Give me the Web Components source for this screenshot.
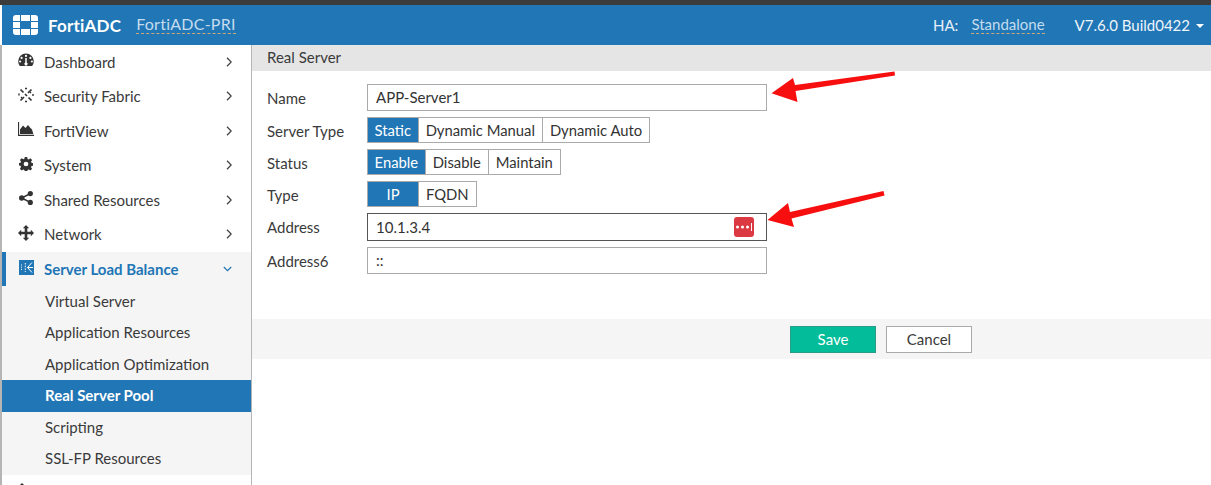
<!DOCTYPE html>
<html>
<head>
<meta charset="utf-8">
<title>FortiADC</title>
<style>
  html, body { margin: 0; padding: 0; background: #fff; overflow: hidden; }
  body { font-family: Lato, "Open Sans", sans-serif; font-size: 15px; color: #3a3a3a; }
</style>
</head>
<body>
<adc-app></adc-app>
<script>
const ICONS = {
  dashboard: `<svg viewBox="0 0 16 14" width="16" height="14"><path fill="#333" fill-rule="evenodd" d="M8 0.5A7.8 7.8 0 0 0 0.2 8.3c0 1.9.6 3.5 1.7 4.7h12.2a7.6 7.6 0 0 0 1.7-4.7A7.8 7.8 0 0 0 8 .5zM8 1.8a1.1 1.1 0 1 1 0 2.2a1.1 1.1 0 0 1 0-2.2zM3.6 3.8a1.1 1.1 0 1 1 0 2.2a1.1 1.1 0 0 1 0-2.2zM12.4 3.8a1.1 1.1 0 1 1 0 2.2a1.1 1.1 0 0 1 0-2.2zM2.1 7.4a1.1 1.1 0 1 1 0 2.2a1.1 1.1 0 0 1 0-2.2zM13.9 7.4a1.1 1.1 0 1 1 0 2.2a1.1 1.1 0 0 1 0-2.2zM7.2 5l1.6 0l-.1 4.6a1.6 1.6 0 1 1-1.4 0z"/></svg>`,
  fabric: `<svg viewBox="0 0 16 16" width="16" height="16" fill="none" stroke="#333" stroke-width="1.700"><path d="M2.500 2.500l3 3M7 7l2 2M10.500 10.500l3 3M13.500 2.500l-3.500 3.500M6 10l-3.500 3.500"/><path stroke-width="1.400" d="M7 1.500h2M1 6.500v2M15 7v2M7 14.500h2M12 5l1 1M4 11l-1 -1"/></svg>`,
  view: `<svg viewBox="0 0 16 14" width="16" height="14"><path fill="#333" d="M0 0h1.100v12.800H16V14H0z"/><path fill="#333" d="M2 12V7.500l3-4 2.500 2.500L10 3l2 2.500 2 2 1.300 4.500z"/></svg>`,
  cog: `<svg viewBox="0 0 16 16" width="14" height="14"><path fill="#333" fill-rule="evenodd" d="M6.600 0h2.800l.4 2.200 1.300.6 1.900-1.300 2 2-1.300 1.900.6 1.300 2.200.4v2.800l-2.200.4-.6 1.300 1.300 1.900-2 2-1.900-1.300-1.300.6-.4 2.200H6.600l-.4-2.200-1.300-.6L3 15.300l-2-2 1.300-1.900-.6-1.300L-.5 9.700V6.900l2.200-.4.6-1.300L1 3.300l2-2 1.900 1.300 1.300-.6zM8 5.300a2.700 2.700 0 1 0 0 5.400a2.700 2.700 0 0 0 0-5.400z"/></svg>`,
  share: `<svg viewBox="0 0 14 14" width="14" height="14"><g fill="#333"><circle cx="11.300" cy="2.600" r="2.600"/><circle cx="11.300" cy="11.400" r="2.600"/><circle cx="2.700" cy="7" r="2.700"/></g><path stroke="#333" stroke-width="1.600" d="M2.700 7L11.300 2.600M2.700 7l8.600 4.400"/></svg>`,
  move: `<svg viewBox="0 0 16 16" width="16" height="16"><path fill="#333" d="M8 0l3.200 3.200H9.300v3.500h3.500V4.800L16 8l-3.200 3.200V9.300H9.300v3.500h1.900L8 16l-3.200-3.200h1.900V9.300H3.200v1.900L0 8l3.200-3.200v1.900h3.500V3.200H4.800z"/></svg>`,
  slb: `<svg viewBox="0 0 15 15" width="15" height="15"><rect width="15" height="15" fill="#2176b5"/><g fill="none" stroke="#fff" stroke-width="1"><path d="M13 2.500L8.500 7.500L13 12.500M8.500 7.500H14"/><path d="M6.300 3v9" stroke-dasharray="1.500 1.200"/><path d="M2.500 4.500v6" stroke-dasharray="1 1.200"/></g></svg>`
};

class AdcHeader extends HTMLElement {
  constructor() {
    super();
    this.attachShadow({ mode: "open" });
    this.shadowRoot.innerHTML = `
      <style>
        :host { display: flex; align-items: center; height: 40px; margin-left: 2px; background: #2176b5; color: #fff; }
        .logo { margin-left: 11px; width: 26px; height: 20px; flex: none; }
        .brand { margin-left: 9px; font-size: 17px; font-weight: 700; letter-spacing: .2px; }
        .dash { color: #c4dcef; border-bottom: 1px dashed #d0a878; line-height: 16px; padding-bottom: 1px; }
        .host { margin-left: 15px; font-size: 16px; letter-spacing: .25px; }
        .right { margin-left: auto; display: flex; align-items: center; font-size: 15px; }
        .ha { color: #e6f0f8; margin-right: 13px; }
        .ver { margin-left: 30px; margin-right: 7px; white-space: nowrap; color: #eef5fb; }
        .caret { width: 0; height: 0; border: 4px solid transparent; border-top: 4.500px solid #fff; border-bottom: 0; margin-left: 6px; display: inline-block; vertical-align: 3px; }
      </style>
      <svg class="logo" viewBox="0 0 26 20" fill="#fff">
        <path d="M3 0h4v6H0V3a3 3 0 0 1 3-3zM8 0h9v6H8zM18 0h4a3 3 0 0 1 3 3v3h-7zM0 7h7v6H0zM18 7h7v6h-7zM0 14h7v6H3a3 3 0 0 1-3-3zM8 14h9v6H8zM18 14h7v3a3 3 0 0 1-3 3h-4z"/>
      </svg>
      <span class="brand">FortiADC</span>
      <span class="host dash">FortiADC-PRI</span>
      <div class="right">
        <span class="ha">HA:</span>
        <span class="dash">Standalone</span>
        <span class="ver">V7.6.0 Build0422<i class="caret"></i></span>
      </div>`;
  }
}
customElements.define("adc-header", AdcHeader);

class SideItem extends HTMLElement {
  constructor() {
    super();
    this.attachShadow({ mode: "open" });
  }
  connectedCallback() {
    const icon = ICONS[this.getAttribute("icon")] || "";
    const open = this.hasAttribute("open");
    this.shadowRoot.innerHTML = `
      <style>
        :host { display: flex; align-items: center; height: 34.500px; padding: 0 19px 0 0; box-sizing: border-box; }
        :host([open]) { background: #f5f5f5; color: #2176b5; font-weight: 700; box-shadow: inset 4px 0 0 #2176b5; }
        .ic { width: 18px; display: flex; justify-content: center; margin: -3px 9px 0 15px; flex: none; }
        .t { flex: 1; white-space: nowrap; }
        svg.chev { flex: none; }
      </style>
      <span class="ic">${icon}</span>
      <span class="t"><slot></slot></span>
      ${open
        ? `<svg class="chev" width="9" height="6" viewBox="0 0 9 6" fill="none" stroke="#2176b5" stroke-width="1.200"><path d="M.8 1l3.700 3.700L8.200 1"/></svg>`
        : `<svg class="chev" width="6" height="10" viewBox="0 0 6 10" fill="none" stroke="#444" stroke-width="1.300"><path d="M1 .8L5.200 5L1 9.200"/></svg>`}`;
  }
}
customElements.define("side-item", SideItem);

class SideSub extends HTMLElement {
  constructor() {
    super();
    this.attachShadow({ mode: "open" });
    this.shadowRoot.innerHTML = `
      <style>
        :host { display: flex; align-items: center; box-sizing: border-box; height: 31.500px; padding: 0 0 1.300px 43px; background: #f5f5f5; white-space: nowrap; }
        :host([active]) { background: #2176b5; color: #fff; font-weight: 700; }
      </style>
      <slot></slot>`;
  }
}
customElements.define("side-sub", SideSub);

class AdcSidebar extends HTMLElement {
  constructor() {
    super();
    this.attachShadow({ mode: "open" });
    this.shadowRoot.innerHTML = `
      <style>
        :host { display: block; width: 252px; flex: none; box-sizing: border-box; border-left: 2px solid #b5b5b5; border-right: 1px solid #b5b5b5; background: #fff; overflow: hidden; }
        .items { margin-top: -.4px; }
        .subs { margin-top: -.5px; }
        .peek { height: 20px; padding: 8px 0 0 15px; box-sizing: border-box; }
        .peek svg { display: block; }
      </style>
      <div class="items">
        <side-item icon="dashboard">Dashboard</side-item>
        <side-item icon="fabric">Security Fabric</side-item>
        <side-item icon="view">FortiView</side-item>
        <side-item icon="cog">System</side-item>
        <side-item icon="share">Shared Resources</side-item>
        <side-item icon="move">Network</side-item>
        <side-item icon="slb" open>Server Load Balance</side-item>
      </div>
      <div class="subs">
        <side-sub>Virtual Server</side-sub>
        <side-sub>Application Resources</side-sub>
        <side-sub>Application Optimization</side-sub>
        <side-sub active>Real Server Pool</side-sub>
        <side-sub>Scripting</side-sub>
        <side-sub>SSL-FP Resources</side-sub>
      </div>
      <div class="peek"><svg width="10" height="10" viewBox="0 0 10 10"><path fill="#333" d="M5 0l5 5H0z"/></svg></div>`;
  }
}
customElements.define("adc-sidebar", AdcSidebar);

class FormRow extends HTMLElement {
  constructor() {
    super();
    this.attachShadow({ mode: "open" });
    const pad = this.getAttribute("pad") || "2";
    this.shadowRoot.innerHTML = `
      <style>
        :host { display: flex; align-items: center; }
        .l { width: 100px; flex: none; padding-top: ${pad}px; }
      </style>
      <span class="l">${this.getAttribute("label")}</span>
      <slot></slot>`;
  }
}
customElements.define("form-row", FormRow);

class TextBox extends HTMLElement {
  constructor() {
    super();
    this.attachShadow({ mode: "open" });
    this.shadowRoot.innerHTML = `
      <style>
        :host { display: flex; align-items: center; justify-content: space-between; box-sizing: border-box; width: 400px; height: 27px; padding: 0 12px 1px 8px; border: 1px solid #aaa; background: #fff; color: #333; }
        :host([focused]) { height: 28px; padding-bottom: 0; border-color: #555; }
      </style>
      <span><slot></slot></span>
      <slot name="end"></slot>`;
  }
}
customElements.define("text-box", TextBox);

class SegGroup extends HTMLElement {
  constructor() {
    super();
    this.attachShadow({ mode: "open" });
  }
  connectedCallback() {
    const opts = this.getAttribute("options").split("|");
    this.shadowRoot.innerHTML = `
      <style>
        :host { display: inline-flex; height: 26px; box-sizing: border-box; border: 1px solid #aaa; background: #fff; color: #333; font-size: 14.800px; }
        span { display: flex; align-items: center; justify-content: center; padding: 0 7px; white-space: nowrap; border-left: 1px solid #aaa; }
        span:first-of-type { border-left: 0; padding: 0 6.600px; background: #2176b5; color: #fff; }
        :host([wide]) span:first-of-type { width: 50px; box-sizing: border-box; }
      </style>
      ${opts.map((o) => `<span>${o}</span>`).join("")}`;
  }
}
customElements.define("seg-group", SegGroup);

class RealServerForm extends HTMLElement {
  constructor() {
    super();
    this.attachShadow({ mode: "open" });
    this.shadowRoot.innerHTML = `
      <style>
        :host { display: block; flex: 1; min-width: 0; position: relative; }
        .title { height: 26px; padding: 0 0 2px 15px; box-sizing: border-box; display: flex; align-items: center; background: #e5e5e5; }
        .rows { display: flex; flex-direction: column; gap: 6px; padding: 13px 0 0 15px; height: 235px; box-sizing: border-box; }
        .foot { display: flex; align-items: center; gap: 10px; height: 40px; background: #f5f5f5; padding-left: 538px; margin-top: 13px; }
        .btn { display: flex; align-items: center; justify-content: center; width: 86px; height: 27px; box-sizing: border-box; border: 1px solid #aaa; background: #fff; }
        .btn.save { background: #03bd9a; border-color: #2a9c86; color: #fff; }
        .lp { display: block; width: 20px; height: 20px; }
        .arrows { position: absolute; left: 0; top: 0; pointer-events: none; }
      </style>
      <div class="title">Real Server</div>
      <div class="rows">
        <form-row label="Name" pad="1"><text-box>APP-Server1</text-box></form-row>
        <form-row label="Server Type"><seg-group options="Static|Dynamic Manual|Dynamic Auto"></seg-group></form-row>
        <form-row label="Status"><seg-group options="Enable|Disable|Maintain"></seg-group></form-row>
        <form-row label="Type"><seg-group wide options="IP|FQDN"></seg-group></form-row>
        <form-row label="Address" pad="0"><text-box focused>10.1.3.4<svg class="lp" slot="end" viewBox="0 0 20 20"><rect width="20" height="20" rx="3" fill="#dc3a42"/><g fill="#fff"><circle cx="3.500" cy="10" r="1.500"/><circle cx="8.500" cy="10" r="1.500"/><circle cx="13.500" cy="10" r="1.500"/><rect x="17" y="6" width="1" height="8"/></g></svg></text-box></form-row>
        <form-row label="Address6" pad="1"><text-box>::</text-box></form-row>
      </div>
      <div class="foot">
        <div class="btn save">Save</div>
        <div class="btn">Cancel</div>
      </div>
      <svg class="arrows" width="959" height="250" viewBox="252 45 959 250">
        <path fill="#f70f0f" d="M771.500 93.300L793 78L795 85L894.500 71.500L895 75.500L795.500 91L797.500 102z"/>
        <path fill="#f70f0f" d="M767.500 220L788 203L790 212L883.500 191L884.500 195.500L791.500 218.500L794 227z"/>
      </svg>`;
  }
}
customElements.define("real-server-form", RealServerForm);

class AdcApp extends HTMLElement {
  constructor() {
    super();
    this.attachShadow({ mode: "open" });
    this.shadowRoot.innerHTML = `
      <style>
        :host { display: block; height: 485px; overflow: hidden; }
        .topline { height: 5px; background: #3c3c3c; }
        .main { display: flex; height: 440px; }
      </style>
      <div class="topline"></div>
      <adc-header></adc-header>
      <div class="main">
        <adc-sidebar></adc-sidebar>
        <real-server-form></real-server-form>
      </div>`;
  }
}
customElements.define("adc-app", AdcApp);
</script>
</body>
</html>
